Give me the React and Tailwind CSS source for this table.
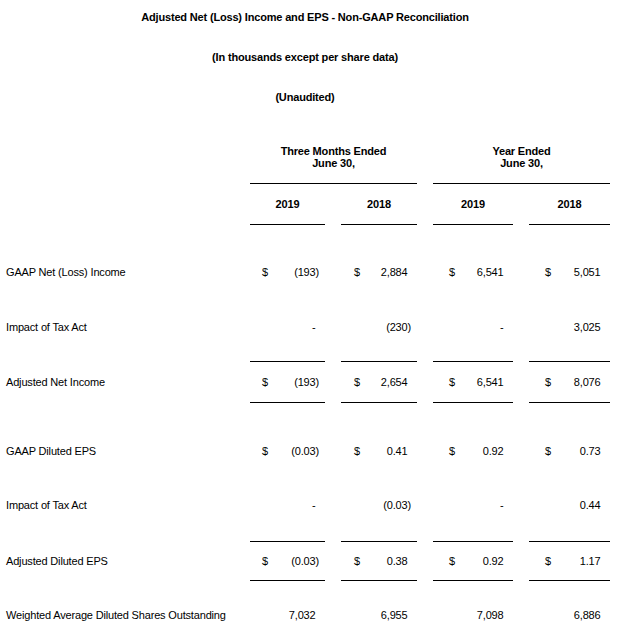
import React from "react";

const cols = ["pl-[12px]", "pl-[13px]", "pl-[16px]", "pl-[16px]"];

const rows = [
  { label: "GAAP Net (Loss) Income", vals: ["(193)", "2,884", "6,541", "5,051"], dollar: true, mt: "mt-[40px]" },
  { label: "Impact of Tax Act", vals: ["-", "(230)", "-", "3,025"], mt: "mt-[41px]" },
  { label: "Adjusted Net Income", vals: ["(193)", "2,654", "6,541", "8,076"], dollar: true, lined: "h-[42px]", mt: "mt-[27px]" },
  { label: "GAAP Diluted EPS", vals: ["(0.03)", "0.41", "0.92", "0.73"], dollar: true, mt: "mt-[41px]" },
  { label: "Impact of Tax Act", vals: ["-", "(0.03)", "-", "0.44"], mt: "mt-[40px]" },
  { label: "Adjusted Diluted EPS", vals: ["(0.03)", "0.38", "0.92", "1.17"], dollar: true, lined: "h-[40px]", mt: "mt-[29px]" },
  { label: "Weighted Average Diluted Shares Outstanding", vals: ["7,032", "6,955", "7,098", "6,886"], mt: "mt-[27px]" },
];

// right-aligned figure; positives get an invisible ")" so digits line up with negatives
const Figure = ({ v }) => {
  const neg = v.endsWith(")");
  return (
    <span className="pr-[6px] whitespace-nowrap">
      {v}
      {!neg && <span className="invisible">)</span>}
    </span>
  );
};

const Row = ({ label, vals, dollar, lined, mt }) => (
  <div className={`grid grid-cols-[234px_75px_76px_80px_81px] gap-x-4 ${mt}`}>
    <div className={`flex items-center pl-[6px] ${lined ? lined : "h-[14px]"}`}>{label}</div>
    {vals.map((v, i) => (
      <div
        key={i}
        className={`flex items-center justify-between ${cols[i]} ${
          lined ? `${lined} border-t border-b border-black` : "h-[14px]"
        }`}
      >
        <span>{dollar ? "$" : ""}</span>
        <Figure v={v} />
      </div>
    ))}
  </div>
);

export default function App() {
  return (
    <div className="w-[631px] h-[638px] bg-white text-black text-[11px] leading-[14px] tracking-[-0.17px] font-['Liberation_Sans',Arial,sans-serif]">
      <div className="w-[610px]">
        {/* headings */}
        <div className="pt-[10px] text-center font-bold">
          <div>Adjusted Net (Loss) Income and EPS - Non-GAAP Reconciliation</div>
          <div className="mt-[26px]">(In thousands except per share data)</div>
          <div className="mt-[26px]">(Unaudited)</div>
        </div>

        {/* period headers */}
        <div className="mt-[41px] grid grid-cols-[234px_75px_76px_80px_81px] gap-x-4 font-bold text-center leading-[12px]">
          <div />
          <div className="col-span-2 pb-[14px] border-b border-black">
            Three Months Ended
            <br />
            June 30,
          </div>
          <div className="col-span-2 pb-[14px] border-b border-black">
            Year Ended
            <br />
            June 30,
          </div>
        </div>

        <div className="grid grid-cols-[234px_75px_76px_80px_81px] gap-x-4 font-bold text-center">
          <div />
          {["2019", "2018", "2019", "2018"].map((y, i) => (
            <div key={i} className="pt-[13px] pb-[13px] border-b border-black">
              {y}
            </div>
          ))}
        </div>

        {rows.map((r, i) => (
          <Row key={i} {...r} />
        ))}
      </div>
    </div>
  );
}
